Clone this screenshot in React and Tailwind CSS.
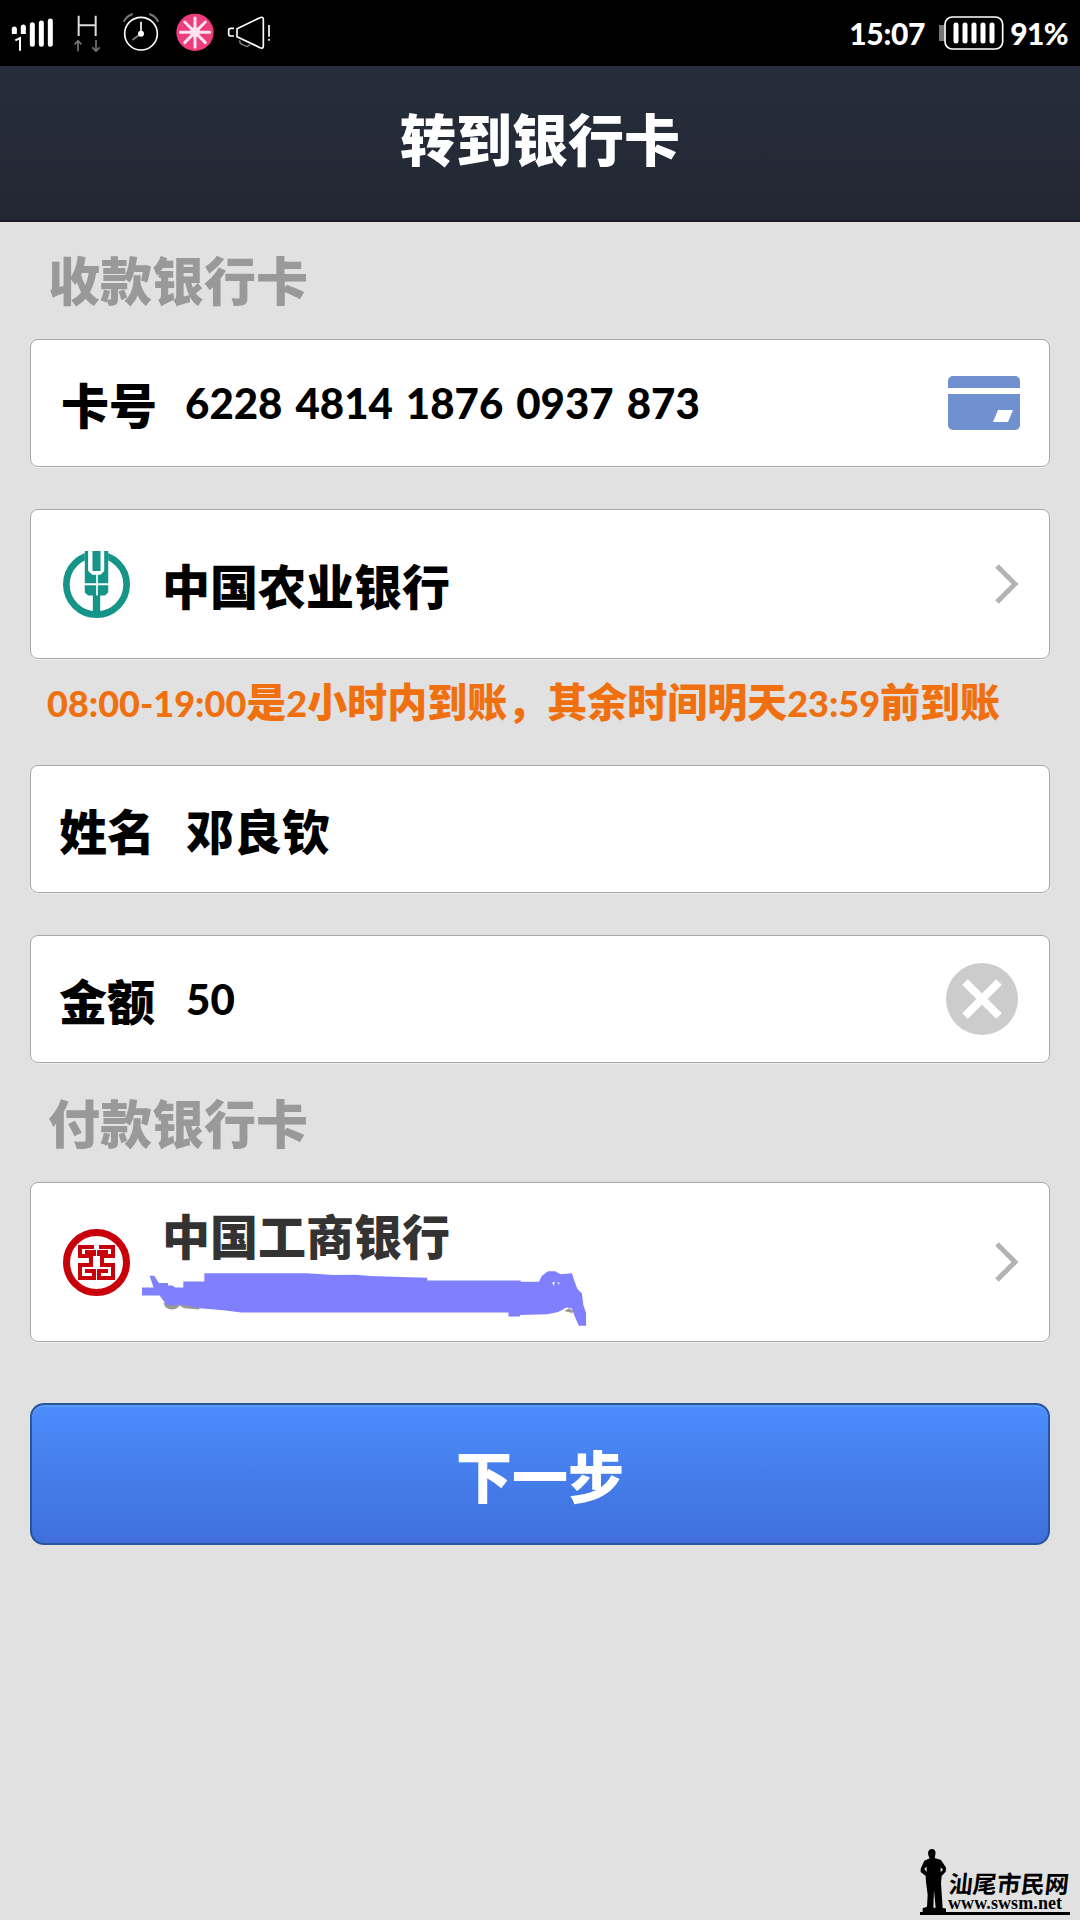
import React, { useState } from 'react';

const CJK = "font-['Noto_Sans_CJK_SC',sans-serif]";
const LATIN = "font-['Lato','Noto_Sans_CJK_SC',sans-serif]";

function SignalIcon() {
  return (
    <svg className="h-10 w-[45px]" viewBox="30 40 135 120" fill="none" stroke="#fff" strokeWidth="15" strokeLinecap="round">
      <path d="M97 75V134M124 70V134M151 64V134" />
      <path d="M43 103V89M70 103V82" strokeLinecap="butt" />
      <path d="M43 90V88M70 84V82" />
      <path d="M46 122L60 115V153" strokeWidth="6" strokeLinecap="butt" />
    </svg>
  );
}

function NetworkIcon() {
  return (
    <svg className="ml-4 h-10 w-[31px]" viewBox="213 40 93 120" fill="none" strokeWidth="6">
      <path d="M236 48V109M287 48V109M236 77H287" stroke="#ddd" />
      <path d="M234 155V124M224 134L234 123L244 134M288 121V153M277 143L288 154L299 143" stroke="#777" strokeWidth="5" />
    </svg>
  );
}

function AlarmIcon() {
  return (
    <svg className="ml-5 h-10 w-[38px]" viewBox="366 40 114 120" fill="none">
      <circle cx="423" cy="102" r="49" stroke="#fff" strokeWidth="5" />
      <path d="M423 102V66" stroke="#fff" strokeWidth="5" />
      <path d="M423 102L397 121M371 66Q380 49 398 43M448 43Q466 49 475 66" stroke="#777" strokeWidth="6" />
      <circle cx="423" cy="102" r="9" fill="#fff" />
    </svg>
  );
}

function FlowerIcon() {
  return (
    <svg className="ml-[15px] h-10 w-10" viewBox="525 40 120 120">
      <circle cx="585" cy="98" r="56" fill="#ee3d7c" />
      <path d="M585 55V142M541 98H629M554 67L616 129M616 67L554 129" stroke="#fde4ee" strokeWidth="9" strokeLinecap="round" />
      <circle cx="585" cy="98" r="15" fill="#fde4ee" />
    </svg>
  );
}

function SpeakerIcon() {
  return (
    <svg className="ml-3 h-10 w-[45px]" viewBox="681 40 135 120" fill="none" stroke="#fff" strokeWidth="5">
      <path d="M718 122L722 132L741 141L750 135" stroke="#777" />
      <path d="M711 87L780 54Q790 50 790 60V139Q790 148 780 144L711 111Z" strokeLinejoin="round" />
      <path d="M702 86H693Q686 86 686 92V103Q686 109 693 109H702M807 76V111M807 117V123" />
    </svg>
  );
}

function BatteryIcon() {
  return (
    <svg className="h-9 w-[65px]" viewBox="404 45 195 108" fill="none">
      <rect x="404" y="75" width="16" height="48" fill="#777" />
      <rect x="422" y="51" width="173" height="96" rx="22" stroke="#fff" strokeWidth="5" />
      <path d="M455 75V123M482 75V123M509 75V123M536 75V123M563 75V123" stroke="#fff" strokeWidth="15" strokeLinecap="round" />
    </svg>
  );
}

function StatusBar() {
  return (
    <div className={`flex h-[66px] items-center justify-between bg-black pl-[10px] pr-[12px] text-white ${LATIN}`}>
      <div className="flex items-center">
        <SignalIcon />
        <NetworkIcon />
        <AlarmIcon />
        <FlowerIcon />
        <SpeakerIcon />
      </div>
      <div className="flex items-center text-[30px] font-black leading-none">
        <span className="mr-[14px] tracking-[-0.3px]">15:07</span>
        <BatteryIcon />
        <span className="ml-[6px] tracking-[-0.6px]">91%</span>
      </div>
    </div>
  );
}

function CardIcon() {
  return (
    <svg className="h-[54px] w-[72px]" viewBox="0 0 72 54">
      <rect width="72" height="54" rx="5" fill="#7090d0" />
      <path d="M0 12H72V18H0ZM50 34H65L60 46H45Z" fill="#fff" />
    </svg>
  );
}

function Chevron() {
  return (
    <svg className="h-[42px] w-6" viewBox="0 0 24 42" fill="none">
      <path d="M2 3L20 21L2 39" stroke="#b3b3b3" strokeWidth="5" />
    </svg>
  );
}

function AbcLogo() {
  return (
    <svg className="h-[67px] w-[67px]" viewBox="130 153 200 200">
      <circle cx="230" cy="253" r="90" fill="none" stroke="#159588" strokeWidth="20" />
      <path d="M195 150H265V200H195Z" fill="#fff" />
      <path d="M218 153H242V213H218ZM195 153H205V213L218 224H229V249H195ZM265 153H253V213L242 224H234V249H265ZM195 255H229V286H241V350H219V286H205L195 277ZM265 255H234V286H255L265 277Z" fill="#159588" />
    </svg>
  );
}

function IcbcLogo() {
  return (
    <svg className="h-[67px] w-[67px]" viewBox="0 0 67 67" fill="none" stroke="#c8000c">
      <circle cx="33.5" cy="33.5" r="30" strokeWidth="7" />
      <path d="M31 18H17V27H28V36H17V49H31V42H22M36 18H50V27H39V36H50V49H36V42H45M22 23H31V27M45 23H36V27" strokeWidth="4" />
    </svg>
  );
}

// 手绘涂抹，遮住卡号
function Scribble() {
  return (
    <svg className="h-[57px] w-[446px]" viewBox="320 290 1166 170" preserveAspectRatio="none">
      <path d="M376 388Q380 408 398 408Q412 408 418 396L430 404L470 408V390ZM1424 412L1436 404L1450 412L1444 418Z" fill="#999" />
      <path d="M320 342H350L340 307H352L364 329H388V336H400L406 342H428V324H483V300H752L820 305L878 304L916 308L1000 311L1066 313V321H1310V325H1358Q1364 304 1382 294H1400L1414 303L1444 300L1450 321L1458 346L1470 360L1474 395L1481 418V456H1462L1450 425L1444 405L1430 402L1408 415L1380 422L1308 424V429H1278V417H580L532 410L472 404L420 393L408 396L384 394L366 366H320Z" fill="#8080ff" />
      <path d="M1392 328L1399 324L1397 338ZM1405 327H1411V334Z" fill="#fff" />
    </svg>
  );
}

function ClearIcon() {
  return (
    <svg className="h-[72px] w-[72px]" viewBox="0 0 72 72">
      <circle cx="36" cy="36" r="36" fill="#ccc" />
      <path d="M19 19L53 53M53 19L19 53" stroke="#fff" strokeWidth="8" />
    </svg>
  );
}

function Panel({ className, children }) {
  return (
    <div className={`mx-[30px] flex items-center rounded-lg border border-[#a9a9a9] bg-white shadow-[0_1px_0_#eee] ${className}`}>
      {children}
    </div>
  );
}

function SectionLabel({ children }) {
  return <h2 className="pl-12 text-[52px] font-black leading-[52px] text-[#999]">{children}</h2>;
}

function Watermark() {
  return (
    <div className="absolute bottom-[5px] right-[10px] flex h-[68px] w-[150px] items-end border-b-[3px] border-black text-black">
      <svg className="h-[64px] w-[26px] shrink-0" viewBox="53 24 78 192">
        <path d="M78 46Q74 28 89 27Q102 28 99 44L97 54L116 60L132 84L130 95L118 108L116 130L121 204L134 206V216H61V205L74 200L76 165L71 126L70 108L55 96V86L66 62L82 55Z" />
        <path d="M66 86L73 80V96ZM115 82L122 89L115 97ZM95 150L100 203H93Z" fill="#e1e1e1" />
      </svg>
      <div className="flex flex-col">
        <span className="-skew-x-6 whitespace-nowrap pl-[3px] text-[24px] font-bold leading-[24px]">汕尾市民网</span>
        <span className="pl-[2px] font-['Liberation_Serif',serif] text-[18px] font-bold leading-[17px] tracking-[0.1px]">www.swsm.net</span>
      </div>
    </div>
  );
}

export default function App() {
  const [amount, setAmount] = useState('50');

  return (
    <div className={`relative h-[1920px] w-[1080px] overflow-hidden bg-[#e1e1e1] text-black ${CJK}`}>
      <StatusBar />
      <header className="flex h-[156px] justify-center border-b-2 border-[#191c28] bg-linear-to-b from-[#262e3b] to-[#222733] pt-[43px]">
        <h1 className="text-[56px] font-black leading-[56px] text-white">转到银行卡</h1>
      </header>

      <div className="pt-[31px]">
        <SectionLabel>收款银行卡</SectionLabel>
      </div>

      <Panel className="mt-[34px] h-32 pl-[30px] pr-[29px]">
        <span className="text-[48px] font-black leading-none">卡号</span>
        <span className={`ml-[28px] text-[42px] font-black leading-none [word-spacing:3px] ${LATIN}`}>6228 4814 1876 0937 873</span>
        <span className="ml-auto"><CardIcon /></span>
      </Panel>

      <Panel className="mt-[42px] h-[150px] pl-8 pr-[30px]">
        <AbcLogo />
        <span className="ml-[32px] text-[48px] font-black leading-none">中国农业银行</span>
        <span className="ml-auto"><Chevron /></span>
      </Panel>

      <p className={`mt-[21px] whitespace-nowrap pl-[47px] text-[40px] font-black leading-10 text-[#f0700f] ${CJK}`}>
        <span className={`text-[36px] ${LATIN}`}>08:00-19:00</span>是<span className={`text-[36px] ${LATIN}`}>2</span>小时内到账，其余时间明天<span className={`text-[36px] ${LATIN}`}>23:59</span>前到账
      </p>

      <Panel className="mt-[42px] h-32 pl-[28px]">
        <span className="text-[48px] font-black leading-none">姓名</span>
        <span className="ml-[31px] text-[48px] font-black leading-none">邓良钦</span>
      </Panel>

      <Panel className="mt-[42px] h-32 pl-[28px] pr-[31px]">
        <span className="text-[48px] font-black leading-none">金额</span>
        <span className={`ml-[31px] text-[42px] font-black leading-none ${LATIN}`}>{amount}</span>
        <button className="ml-auto" onClick={() => setAmount('')}><ClearIcon /></button>
      </Panel>

      <div className="pt-[33px]">
        <SectionLabel>付款银行卡</SectionLabel>
      </div>

      <Panel className="mt-[34px] h-40 pl-8 pr-[30px]">
        <IcbcLogo />
        <div className="ml-[12px] flex h-full flex-col pt-[27px]">
          <span className="pl-5 text-[48px] font-black leading-[48px] text-[#333]">中国工商银行</span>
          <span className="mt-[12px]"><Scribble /></span>
        </div>
        <span className="ml-auto"><Chevron /></span>
      </Panel>

      <button className="mx-[30px] mt-[61px] flex h-[142px] w-[1020px] items-center justify-center rounded-[14px] border-2 border-[#28569d] bg-linear-to-b from-[#4c8dfc] to-[#3f6fdc] text-[56px] font-black leading-none text-white shadow-[inset_0_2px_0_#5b9aff]">
        下一步
      </button>

      <Watermark />
    </div>
  );
}
